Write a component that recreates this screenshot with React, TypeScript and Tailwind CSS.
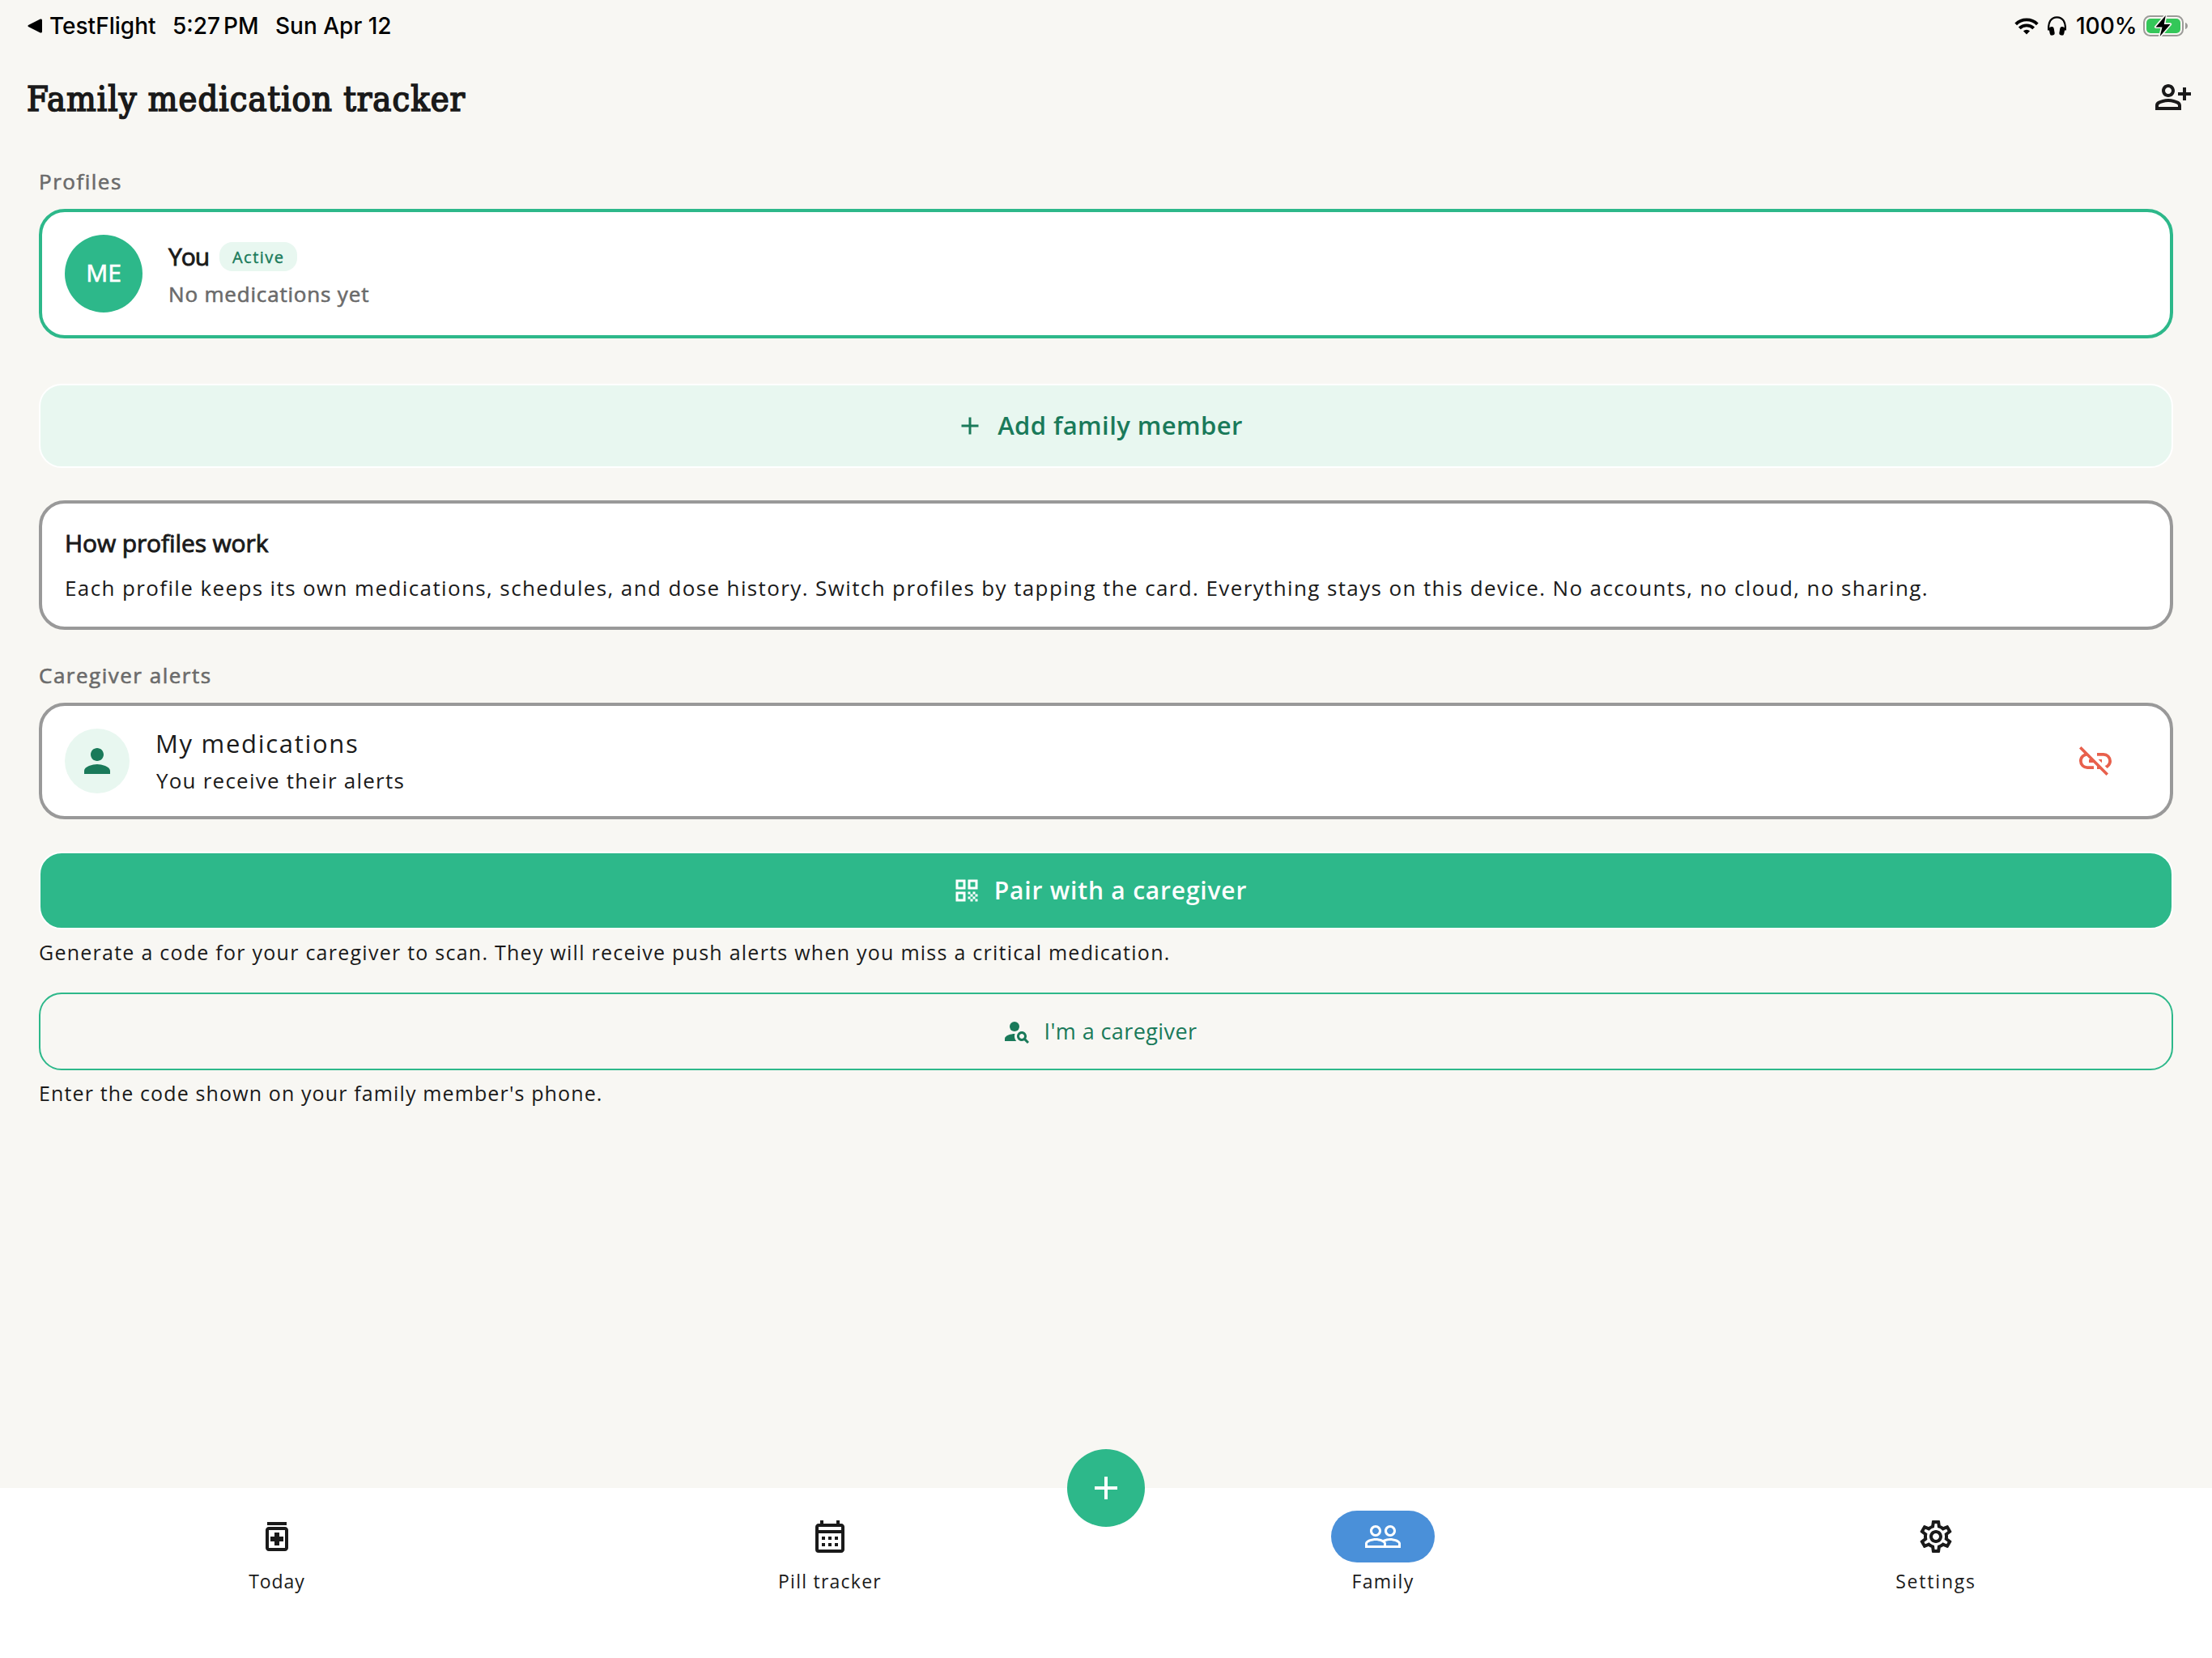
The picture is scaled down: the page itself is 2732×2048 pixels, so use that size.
import type { ReactNode } from 'react';
import {
  MdAdd,
  MdOutlineCalendarMonth,
  MdOutlineMedication,
  MdOutlinePersonAddAlt,
  MdOutlineSettings,
  MdPeopleOutline,
  MdPerson,
  MdPersonSearch,
  MdQrCode,
} from 'react-icons/md';

function WifiIcon() {
  return (
    <svg className="w-[30px] h-[21px]" viewBox="0 0 30 21" fill="none" stroke="#000" strokeWidth="3.9">
      <path d="M1.7 7.8a19 19 0 0 1 26.6 0" />
      <path d="M6.3 12.9a12.4 12.4 0 0 1 17.4 0" />
      <path d="M15 20.4l-4.1-4.1a5.9 5.9 0 0 1 8.2 0z" fill="#000" stroke="none" />
    </svg>
  );
}

function HeadphonesIcon() {
  return (
    <svg className="w-[23px] h-[24px]" viewBox="0 0 23 24">
      <path d="M1.2 17.5C.2 7.5 4.2 1.3 11.5 1.3S22.8 7.5 21.8 17.5" fill="none" stroke="#000" strokeWidth="2.2" />
      <rect x="2.2" y="13" width="6" height="10.6" rx="2.6" transform="rotate(-10 5.2 18.3)" />
      <rect x="14.8" y="13" width="6" height="10.6" rx="2.6" transform="rotate(10 17.8 18.3)" />
    </svg>
  );
}

function BatteryIcon() {
  return (
    <svg className="w-[55px] h-[28px]" viewBox="0 0 55 28">
      <rect x="1" y="2" width="48" height="24" rx="7.5" fill="none" stroke="#9c9b98" strokeWidth="2" />
      <path d="M52 10c1.8.5 3 2.2 3 4s-1.2 3.5-3 4z" fill="#9c9b98" />
      <rect x="4" y="5" width="42" height="18" rx="5" fill="#34c759" />
      <path
        d="M27.8.9L15.5 15.4h8L20.6 27 33.6 11.9h-7.8z"
        fill="#000"
        stroke="#f8f7f3"
        strokeWidth="3.2"
        strokeLinejoin="round"
        paintOrder="stroke"
      />
    </svg>
  );
}

function LinkOffIcon() {
  return (
    <svg className="size-12" viewBox="0 0 24 24" fill="currentColor">
      <path d="M17,7H13V8.9H17C18.71,8.9 20.1,10.29 20.1,12C20.1,13.43 19.12,14.63 17.79,15L19.25,16.44C20.88,15.61 22,13.95 22,12A5,5 0 0,0 17,7M16,11H13.81L15.81,13H16V11M2,4.27L5.11,7.38C3.29,8.12 2,9.91 2,12A5,5 0 0,0 7,17H11V15.1H7C5.29,15.1 3.9,13.71 3.9,12C3.9,10.41 5.11,9.1 6.66,8.93L8.73,11H8V13H10.73L13,15.27V17H14.73L18.74,21L20,19.74L3.27,3L2,4.27Z" />
    </svg>
  );
}

function StatusBar() {
  return (
    <div className="flex h-16 items-center pl-[34px] pr-[30px] font-['Inter',sans-serif] text-[28px] font-[450] leading-none text-black">
      <svg className="mr-[9px] w-[18px] h-[18px]" viewBox="0 0 18 18">
        <path d="M1 8.1L15.8.6C17 0 18 .7 18 1.9v14.2c0 1.2-1 1.9-2.2 1.3L1 9.9C.2 9.5.2 8.5 1 8.1z" />
      </svg>
      <span className="w-[152px]">TestFlight</span>
      <span className="w-[63px]">5:27</span>
      <span className="w-16">PM</span>
      <span>Sun Apr 12</span>
      <div className="ml-auto flex items-center">
        <WifiIcon />
        <div className="ml-[11px] mr-3">
          <HeadphonesIcon />
        </div>
        <span className="w-[83px]">100%</span>
        <BatteryIcon />
      </div>
    </div>
  );
}

function SectionLabel({ children }: { children: ReactNode }) {
  return (
    <div className="text-[26px] leading-8 tracking-[1.5px] text-[#6b6b6b] [-webkit-text-stroke:0.6px]">{children}</div>
  );
}

const tabs = [
  { label: 'Today', icon: <MdOutlineMedication />, tracking: 'tracking-[0.9px]' },
  { label: 'Pill tracker', icon: <MdOutlineCalendarMonth />, tracking: 'tracking-[1.25px]' },
  { label: 'Family', icon: <MdPeopleOutline />, tracking: 'tracking-[1.35px]', active: true },
  { label: 'Settings', icon: <MdOutlineSettings />, tracking: 'tracking-[1.8px]' },
];

function BottomNav() {
  return (
    <nav className="relative mt-auto grid h-[210px] grid-cols-4 bg-white pt-7">
      {tabs.map((tab) => (
        <div key={tab.label} className="flex flex-col items-center gap-[7px]">
          <div
            className={`flex h-16 w-32 items-center justify-center rounded-full text-[48px] ${
              tab.active ? 'bg-[#4a90d9] text-white' : ''
            }`}
          >
            {tab.icon}
          </div>
          <span className={`pl-px text-[23px] leading-8 ${tab.tracking}`}>{tab.label}</span>
        </div>
      ))}
      <button className="absolute left-1/2 -top-12 flex size-24 -translate-x-1/2 items-center justify-center rounded-full bg-[#2db88a] text-[48px] text-white">
        <MdAdd />
      </button>
    </nav>
  );
}

export default function App() {
  return (
    <div className="flex h-[2048px] w-[2732px] flex-col overflow-hidden bg-[#f8f7f3] font-['Open_Sans',sans-serif] text-[#1a1a1a]">
      <StatusBar />

      <header className="flex h-28 items-center justify-between pl-[33px] pr-6">
        <h1 className="pt-1 font-['DejaVu_Serif_Condensed','DejaVu_Serif',serif] text-[43px] leading-none tracking-[1.05px] [font-stretch:condensed] [-webkit-text-stroke:1.7px]">
          Family medication tracker
        </h1>
        <MdOutlinePersonAddAlt className="size-12" />
      </header>

      <main className="flex flex-col px-12 pt-8">
        <SectionLabel>Profiles</SectionLabel>

        {/* Active profile */}
        <div className="mt-[18px] flex h-40 items-center gap-8 rounded-[32px] border-4 border-[#2db88a] bg-white px-7">
          <div className="flex size-24 items-center justify-center rounded-full bg-[#2db88a] pb-[3px] text-[30px] text-white [-webkit-text-stroke:0.7px]">
            ME
          </div>
          <div className="flex flex-col gap-2.5">
            <div className="flex h-10 items-center gap-[13px]">
              <span className="pb-px text-[30px] leading-10 tracking-[-1px] [-webkit-text-stroke:0.9px]">You</span>
              <span className="flex h-9 w-24 items-center justify-center rounded-2xl bg-[#e8f7f0] pt-px text-[20px] tracking-[1.5px] text-[#1a7a5a] [-webkit-text-stroke:0.4px]">
                Active
              </span>
            </div>
            <span className="text-[26px] leading-8 tracking-[0.82px] text-[#6b6b6b] [-webkit-text-stroke:0.6px]">
              No medications yet
            </span>
          </div>
        </div>

        <button className="mt-14 flex h-[104px] items-center justify-center gap-4 rounded-[28px] border-2 border-white bg-[#e8f7f0] pr-[17px] text-[#1a7a5a]">
          <MdAdd className="size-9" />
          <span className="pb-0.5 text-[31px] font-semibold leading-10 tracking-[0.43px]">Add family member</span>
        </button>

        <div className="mt-10 flex h-40 flex-col gap-[19px] rounded-[32px] border-4 border-[#999999] bg-white px-7 pt-[29px]">
          <h2 className="text-[30px] leading-10 tracking-[-0.12px] [-webkit-text-stroke:0.9px]">How profiles work</h2>
          <p className="whitespace-nowrap text-[26px] leading-8 tracking-[1.38px]">
            Each profile keeps its own medications, schedules, and dose history. Switch profiles by tapping the card.
            Everything stays on this device. No accounts, no cloud, no sharing.
          </p>
        </div>

        <div className="mt-10">
          <SectionLabel>Caregiver alerts</SectionLabel>
        </div>

        {/* Linked caregiver */}
        <div className="mt-[18px] flex h-36 items-center rounded-[32px] border-4 border-[#999999] bg-white px-7">
          <div className="flex size-20 items-center justify-center rounded-full bg-[#e8f7f0] text-[48px] text-[#1a7a5a]">
            <MdPerson />
          </div>
          <div className="mb-0.5 ml-8 flex flex-col gap-2.5">
            <span className="text-[31px] leading-10 tracking-[1.7px]">My medications</span>
            <span className="pl-px text-[26px] leading-8 tracking-[1.22px]">You receive their alerts</span>
          </div>
          <button className="ml-auto mr-10 text-[#e8604c]">
            <LinkOffIcon />
          </button>
        </div>

        <button className="mt-10 flex h-24 items-center justify-center gap-4 rounded-[28px] border-2 border-white bg-[#2db88a] pr-4 text-white">
          <MdQrCode className="size-9" />
          <span className="text-[30px] font-semibold leading-10 tracking-[0.8px]">Pair with a caregiver</span>
        </button>
        <p className="mt-3 text-[25px] leading-8 tracking-[1.25px]">
          Generate a code for your caregiver to scan. They will receive push alerts when you miss a critical medication.
        </p>

        <button className="mt-[34px] flex h-24 items-center justify-center gap-4 rounded-[28px] border-2 border-[#2db88a] pr-4 text-[#1a7a5a]">
          <MdPersonSearch className="size-9" />
          <span className="text-[27px] leading-10 tracking-[0.4px]">I'm a caregiver</span>
        </button>
        <p className="mt-3 text-[25px] leading-8 tracking-[1.13px]">Enter the code shown on your family member's phone.</p>
      </main>

      <BottomNav />
    </div>
  );
}
